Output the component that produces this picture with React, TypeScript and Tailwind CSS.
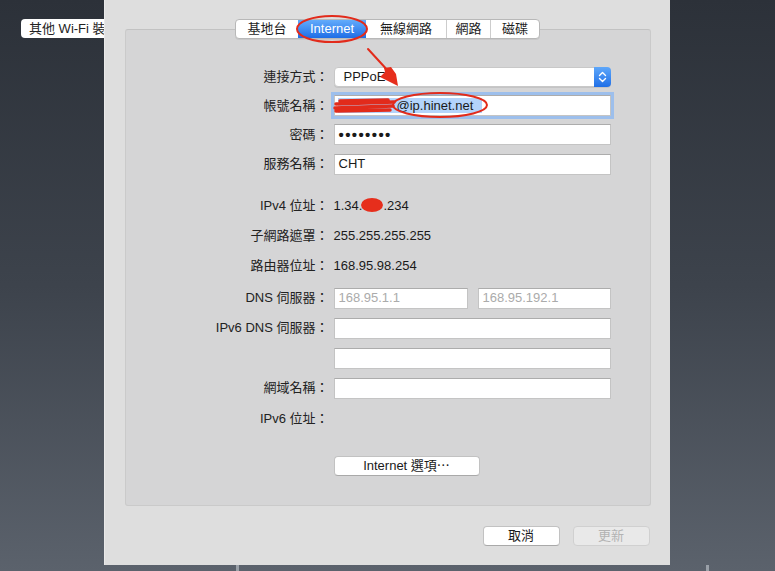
import React from "react";

const Field = ({ children, className = "" }: { children?: React.ReactNode; className?: string }) => (
  <div
    className={
      "h-[21px] bg-white border border-[#c4c4c4] border-t-[#acacac] flex items-center px-[3px] text-[13px] text-[#1a1a1a] " +
      className
    }
  >
    {children}
  </div>
);

const Row = ({ label, children, h = "h-[30px]", className = "" }: { label: string; children?: React.ReactNode; h?: string; className?: string }) => (
  <div className={"flex items-center " + h + " " + className}>
    <div className="w-[203px] text-right text-[13px] text-[#222] whitespace-nowrap">{label}</div>
    <div className="ml-[5px] w-[277px]">{children}</div>
  </div>
);

export default function App() {
  const tabs = [
    { t: "基地台", w: "w-[62px]" },
    { t: "Internet", w: "w-[68px]", sel: true },
    { t: "無線網路", w: "w-[80px]" },
    { t: "網路", w: "w-[44px]" },
    { t: "磁碟", w: "w-[49px]" },
  ];
  return (
    <div className="relative w-[775px] h-[571px] overflow-hidden bg-gradient-to-b from-[#2c3139] via-[#3d434c] to-[#5b626c] font-[Liberation_Sans,Noto_Sans_CJK_TC,sans-serif]">
      <div className="flex h-full">
        {/* left desktop column */}
        <div className="w-[104px] shrink-0 pt-[19px] pl-[21px]">
          <div className="w-[100px] h-[19px] bg-white rounded-[4px] flex items-center pl-[8px] text-[13px] text-[#222] whitespace-nowrap">
            其他 Wi-Fi 裝置
          </div>
        </div>

        {/* sheet */}
        <div className="relative z-10 w-[566px] h-[565px] shrink-0 bg-[#dedede] border-l border-[#e9e9e9] flex flex-col items-center pt-[19px] px-[20px]">
          {/* tabs */}
          <div className="relative z-10 flex h-[20px] rounded-[4px] border border-[#b8b8b8] bg-white overflow-hidden shadow-[0_1px_0_rgba(0,0,0,0.06)]">
            {tabs.map((tb, i) => (
              <div
                key={tb.t}
                className={
                  "flex items-center justify-center text-[13px] " +
                  tb.w +
                  " " +
                  (tb.sel
                    ? "bg-gradient-to-b from-[#62abfb] to-[#1d6de6] text-white"
                    : "text-[#1e1e1e] " + (i > 0 && !tabs[i - 1].sel ? "border-l border-[#cdcdcd]" : ""))
                }
              >
                {tb.t}
              </div>
            ))}
          </div>

          {/* panel */}
          <div className="-mt-[10px] w-[526px] h-[477px] bg-[#d5d5d6] border border-[#cacaca] border-t-[#c2c2c2] rounded-[3px] pt-[32px] flex flex-col">
            <Row label="連接方式：" h="h-[29px]">
              <div className="h-[20px] rounded-[4px] bg-white border border-[#c8c8c8] shadow-[0_1px_0_rgba(0,0,0,0.08)] flex items-stretch">
                <div className="flex-1 flex items-center pl-[9px] text-[13px] text-[#1a1a1a]">PPPoE</div>
                <div className="w-[17px] -my-[1px] -mr-[1px] rounded-r-[4px] bg-gradient-to-b from-[#5ea7fa] to-[#1f6fe7] flex items-center justify-center">
                  <svg width="9" height="12" viewBox="0 0 9 12" fill="none" stroke="white" strokeWidth="1.4" strokeLinecap="round" strokeLinejoin="round">
                    <path d="M1.5 4.5 L4.5 1.5 L7.5 4.5" />
                    <path d="M1.5 7.5 L4.5 10.5 L7.5 7.5" />
                  </svg>
                </div>
              </div>
            </Row>
            <Row label="帳號名稱：" h="h-[29px]">
              <Field className="ring-[3px] ring-[#9dbfec] border-[#86aadc]">
                <span className="inline-block w-[59px] h-[15px] bg-[#b4d4fb]" />
                <span className="bg-[#b4d4fb] h-[15px] leading-[15px] pr-[9px]">@ip.hinet.net</span>
              </Field>
            </Row>
            <Row label="密碼：" h="h-[29px]">
              <Field>
                <span className="pl-[1px] text-[15px] font-bold tracking-[1.4px] leading-none">••••••••</span>
              </Field>
            </Row>
            <Row label="服務名稱：" h="h-[30px]">
              <Field>
                <span className="pl-[1px]">CHT</span>
              </Field>
            </Row>

            <Row label="IPv4 位址：" className="mt-[12px]">
              <div className="text-[13px] text-[#1a1a1a] flex">
                <span>1.34.</span>
                <span className="inline-block w-[21px]" />
                <span>.234</span>
              </div>
            </Row>
            <Row label="子網路遮罩：">
              <div className="text-[13px] text-[#1a1a1a]">255.255.255.255</div>
            </Row>
            <Row label="路由器位址：">
              <div className="text-[13px] text-[#1a1a1a]">168.95.98.254</div>
            </Row>

            <Row label="DNS 伺服器：" className="mt-[2px]">
              <div className="flex gap-[10px]">
                <Field className="w-[134px] text-[#ababab]">
                  <span className="pl-[1px]">168.95.1.1</span>
                </Field>
                <Field className="w-[133px] text-[#ababab]">
                  <span className="pl-[1px]">168.95.192.1</span>
                </Field>
              </div>
            </Row>
            <Row label="IPv6 DNS 伺服器：">
              <Field />
            </Row>
            <Row label="">
              <Field />
            </Row>
            <Row label="網域名稱：">
              <Field />
            </Row>
            <Row label="IPv6 位址：" h="h-[32px]" />

            <div className="flex mt-[21px]">
              <div className="w-[208px]" />
              <div className="w-[146px] h-[20px] rounded-[4px] bg-white border border-[#c2c2c2] border-b-[#a9a9a9] flex items-center justify-center text-[13px] text-[#1a1a1a]">
                Internet 選項⋯
              </div>
            </div>
          </div>

          {/* bottom buttons */}
          <div className="w-[526px] flex justify-end gap-[13px] mt-[20px] pr-[1px]">
            <div className="w-[77px] h-[20px] rounded-[4px] bg-white border border-[#c2c2c2] border-b-[#a9a9a9] flex items-center justify-center text-[13px] text-[#1a1a1a]">
              取消
            </div>
            <div className="w-[77px] h-[20px] rounded-[4px] bg-[#e9e9e9] border border-[#d0d0d0] flex items-center justify-center text-[13px] text-[#b3b3b3]">
              更新
            </div>
          </div>
        </div>
        <div className="flex-1" />
      </div>

      {/* small desktop marks */}
      <div className="absolute left-[236px] top-[565px] w-[3px] h-[6px] bg-[#9aa0a8]" />
      <div className="absolute left-[706px] top-[565px] w-[3px] h-[6px] bg-[#9aa0a8]" />

      {/* red annotations */}
      <svg className="absolute inset-0 z-20 pointer-events-none" width="775" height="571" viewBox="0 0 775 571">
        <g stroke="#e22b1b" fill="none" strokeLinecap="round" strokeLinejoin="round">
          <ellipse cx="332" cy="29" rx="35" ry="13" strokeWidth="2" />
          <ellipse cx="440" cy="105" rx="47" ry="12" strokeWidth="2" />
          <path d="M368 49 L390 73" strokeWidth="2" />
          <path d="M336 104 L394 102 M335 108 L393 106 M336 111 L390 110 M340 101 L388 100" strokeWidth="3.5" />
        </g>
        <g fill="#e62e1c">
          <path d="M398 86 L380 77 L385 72 L384 68 L391 67 L396 74 Z" />
          <ellipse cx="372" cy="205" rx="11" ry="7" />
        </g>
      </svg>
    </div>
  );
}
